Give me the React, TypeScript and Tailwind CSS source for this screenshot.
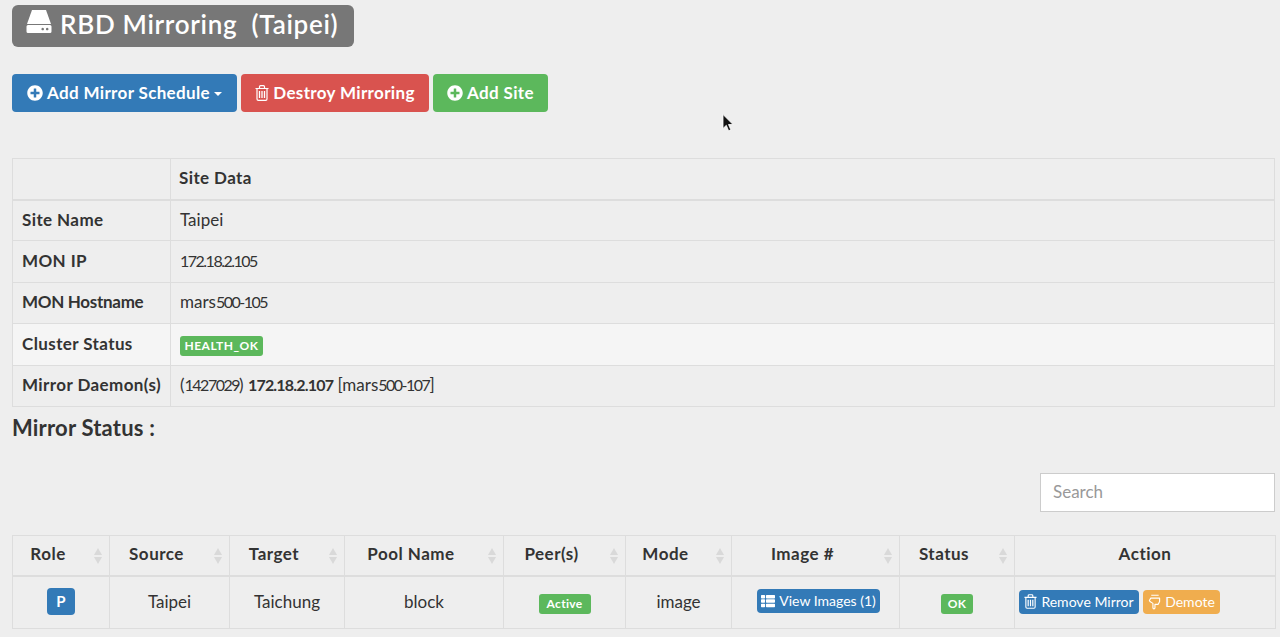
import type { ReactNode } from 'react';
import { FaPlusCircle, FaThList } from 'react-icons/fa';

const FONT = "font-['Lato',sans-serif]";

const btnBase = 'inline-flex h-[38px] items-center justify-center gap-1 whitespace-nowrap rounded text-[17px] font-bold tracking-[0.35px] text-white';
const smallBtn = 'inline-flex h-6 items-center justify-center gap-1 whitespace-nowrap rounded text-sm text-white';
const badge = 'inline-flex h-5 items-center justify-center rounded-[3px] bg-[#5cb85c] text-xs font-bold tracking-[0.3px] text-white';

function HddIcon() {
  return (
    <svg viewBox="0 0 26 26" className="-mt-1 h-[26px] w-[26px] fill-white">
      <path d="M6 1h14l5 14H1z" />
      <path fillRule="evenodd" d="M2 16h22a1.5 1.5 0 0 1 1.5 1.5v5A1.5 1.5 0 0 1 24 24H2a1.500 1.500 0 0 1-1.500-1.500v-5A1.500 1.500 0 0 1 2 16zm16 4a1.300 1.300 0 1 0 0 .01zm4.500 0a1.300 1.300 0 1 0 0 .01z" />
    </svg>
  );
}

function TrashIcon({ className }: { className: string }) {
  return (
    <svg viewBox="0 0 14 16" className={className} fill="none" stroke="currentColor" strokeWidth="1.2">
      <path d="M0.500 3.500h13M2 3.500v10.500a1.300 1.300 0 0 0 1.300 1.300h7.400A1.300 1.300 0 0 0 12 14V3.500M4.500 3.500V1.700A1 1 0 0 1 5.500 0.700h3a1 1 0 0 1 1 1v1.800" />
      <path d="M4.500 6v7M7 6v7M9.500 6v7" strokeWidth="1.300" />
    </svg>
  );
}

function HandDownIcon() {
  return (
    <svg viewBox="0 0 14 16" className="h-4 w-[13px]" fill="none" stroke="currentColor" strokeWidth="1.200" strokeLinejoin="round">
      <path d="M3.500 0.800h8M3 3.800h9.500v3.700l-1.500 3H7.500v3.800a1.100 1.100 0 0 1-2.200 0V9.500L2.500 7.800 1.500 6.500z" />
    </svg>
  );
}

function SortArrows() {
  return (
    <svg viewBox="0 0 8 16" className="absolute right-[7px] top-1/2 h-4 w-2 -translate-y-1/2 fill-[#d9d9d9]">
      <path d="M4 0l4 7H0z" />
      <path d="M4 16l4-7H0z" />
    </svg>
  );
}

// digits are much narrower in the original face than in Lato
function Num({ children }: { children: ReactNode }) {
  return <span className="text-base tracking-[-1.5px]">{children}</span>;
}

function Head({ children, sort = true, width }: { children: ReactNode; sort?: boolean; width: string }) {
  return (
    <th className={`relative border border-b-2 border-[#dddddd] pb-1 text-center font-bold tracking-[0.5px] ${sort ? 'pr-[26px]' : ''} ${width}`}>
      {children}
      {sort && <SortArrows />}
    </th>
  );
}

function InfoRow({ label, children, tint, tight }: { label: string; children: ReactNode; tint?: boolean; tight?: boolean }) {
  return (
    <tr className={`h-[41.4px] ${tint ? 'bg-[#f5f5f5]' : ''}`}>
      <td className={`whitespace-nowrap border border-[#dddddd] px-[9px] pb-[2px] font-bold ${tight ? 'tracking-[-0.3px]' : 'tracking-[0.4px]'}`}>{label}</td>
      <td className="border border-[#dddddd] px-[9px] pb-[2px]">{children}</td>
    </tr>
  );
}

function Cell({ children }: { children: ReactNode }) {
  return <td className="border border-[#dddddd] pb-[2px] text-center">{children}</td>;
}

export default function App() {
  return (
    <div className={`relative h-[637px] overflow-hidden bg-[#eeeeee] px-3 pt-[5px] text-[17px] text-[#333333] ${FONT}`}>
      <h1 className="inline-flex h-[42px] w-[342px] items-center gap-[8px] rounded-md bg-[#777777] pb-1 pl-[14px] text-[26px] font-semibold tracking-[0.7px] text-white">
        <HddIcon />
        <span className="whitespace-pre">RBD Mirroring  (Taipei)</span>
      </h1>

      <div className="mt-[27px] flex gap-1">
        <button className={`${btnBase} w-[225px] bg-[#337ab7]`}>
          <FaPlusCircle className="h-4 w-4" />
          Add Mirror Schedule
          <span className="mt-[2px] h-0 w-0 border-x-4 border-t-4 border-x-transparent border-t-white" />
        </button>
        <button className={`${btnBase} w-[188px] bg-[#d9534f]`}>
          <TrashIcon className="h-4 w-[14px]" />
          Destroy Mirroring
        </button>
        <button className={`${btnBase} w-[115px] bg-[#5cb85c]`}>
          <FaPlusCircle className="h-4 w-4" />
          Add Site
        </button>
      </div>

      <table className="mt-[46px] w-[1263px] table-fixed border-collapse">
        <thead>
          <tr className="h-[41px]">
            <th className="w-[158px] border border-b-2 border-[#dddddd]" />
            <th className="border border-b-2 border-[#dddddd] px-[8px] pb-[2px] text-left font-bold tracking-[0.4px]">Site Data</th>
          </tr>
        </thead>
        <tbody>
          <InfoRow label="Site Name">Taipei</InfoRow>
          <InfoRow label="MON IP"><Num>172.18.2.105</Num></InfoRow>
          <InfoRow label="MON Hostname" tight>mars<Num>500-105</Num></InfoRow>
          <InfoRow label="Cluster Status" tint>
            <span className={`${badge} w-[83px] tracking-[0.5px]`}>HEALTH_OK</span>
          </InfoRow>
          <InfoRow label="Mirror Daemon(s)">
            (<Num>1427029</Num>) <b className="text-base tracking-[-0.8px]">172.18.2.107</b> [mars<Num>500-107</Num>]
          </InfoRow>
        </tbody>
      </table>

      <h4 className="mt-[7px] text-[22px] font-bold leading-[28px] tracking-[0.2px]">Mirror Status :</h4>

      <div className="mt-[31px] flex w-[1263px] justify-end">
        <input
          placeholder="Search"
          className="h-[39px] w-[235px] border border-[#cccccc] bg-white px-3 pb-[2px] text-[17px] placeholder:text-[#999999]"
        />
      </div>

      <table className="mt-[23px] w-[1263px] table-fixed border-collapse">
        <thead>
          <tr className="h-[41px]">
            <Head width="w-[97px]">Role</Head>
            <Head width="w-[120px]">Source</Head>
            <Head width="w-[115px]">Target</Head>
            <Head width="w-[159px]">Pool Name</Head>
            <Head width="w-[122px]">Peer(s)</Head>
            <Head width="w-[106px]">Mode</Head>
            <Head width="w-[168px]">Image #</Head>
            <Head width="w-[115px]">Status</Head>
            <Head width="w-[261px]" sort={false}>Action</Head>
          </tr>
        </thead>
        <tbody>
          <tr className="h-[52px]">
            <Cell>
              <span className="inline-flex h-[27px] w-[28px] items-center justify-center rounded bg-[#337ab7] text-[15px] font-bold text-white">P</span>
            </Cell>
            <Cell>Taipei</Cell>
            <Cell>Taichung</Cell>
            <Cell>block</Cell>
            <Cell>
              <span className={`${badge} w-[52px]`}>Active</span>
            </Cell>
            <Cell>image</Cell>
            <Cell>
              <button className={`${smallBtn} ml-[6px] w-[123px] bg-[#337ab7]`}>
                <FaThList className="h-[14px] w-[14px]" />
                View Images (1)
              </button>
            </Cell>
            <Cell>
              <span className={`${badge} w-[32px]`}>OK</span>
            </Cell>
            <td className="border border-[#dddddd] px-1 pb-[2px]">
              <div className="flex gap-1">
                <button className={`${smallBtn} w-[120px] bg-[#337ab7]`}>
                  <TrashIcon className="h-[15px] w-[13px]" />
                  Remove Mirror
                </button>
                <button className={`${smallBtn} w-[77px] bg-[#f0ad4e]`}>
                  <HandDownIcon />
                  Demote
                </button>
              </div>
            </td>
          </tr>
        </tbody>
      </table>

      {/* mouse pointer left in the capture */}
      <svg viewBox="0 0 12 18" className="absolute left-[722px] top-[114px] h-[18px] w-3">
        <path d="M1 0.500v14l3.300-3.200 2.300 5.500 2.200-1-2.300-5.300h4.500z" fill="#111111" stroke="#ffffff" strokeWidth="0.800" />
      </svg>
    </div>
  );
}
